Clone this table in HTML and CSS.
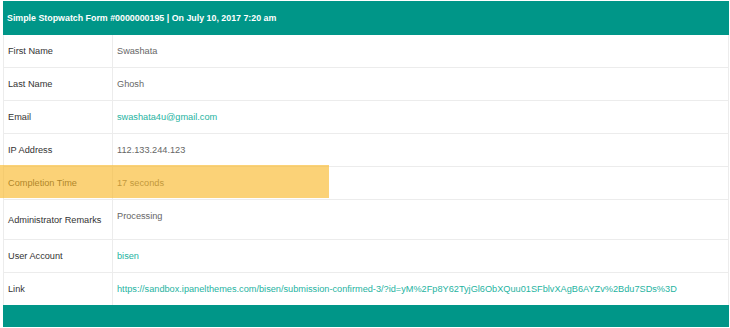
FILE: index.html
```html
<!DOCTYPE html>
<html>
<head>
<meta charset="utf-8">
<link rel="stylesheet" href="styles.css">
</head>
<body>
<div class="panel">
  <div class="panel-head">Simple Stopwatch Form #0000000195 | On July 10, 2017 7:20 am</div>
  <table class="data">
    <tr><th>First Name</th><td>Swashata</td></tr>
    <tr><th>Last Name</th><td>Ghosh</td></tr>
    <tr><th>Email</th><td><a class="lnk">swashata4u@gmail.com</a></td></tr>
    <tr><th>IP Address</th><td>112.133.244.123</td></tr>
    <tr class="hl-row"><th>Completion Time</th><td>17 seconds<span class="hl"></span></td></tr>
    <tr class="tall"><th>Administrator Remarks</th><td><div class="remark">Processing</div></td></tr>
    <tr><th>User Account</th><td><a class="lnk">bisen</a></td></tr>
    <tr><th>Link</th><td><a class="lnk">https://sandbox.ipanelthemes.com/bisen/submission-confirmed-3/?id=yM%2Fp8Y62TyjGl6ObXQuu01SFblvXAgB6AYZv%2Bdu7SDs%3D</a></td></tr>
  </table>
  <div class="panel-foot"></div>
</div>
</body>
</html>
```
FILE: styles.css
```css
html, body {
  margin: 0;
  padding: 0;
  background: #fff;
}
body {
  padding: 1px 1px 0 3px;
  font-family: "Liberation Sans", Arial, sans-serif;
  font-size: 9.2px;
}
.panel {
  width: 726px;
  position: relative;
}
.panel-head {
  background: #009688;
  color: #fff;
  font-weight: bold;
  font-size: 8.85px;
  height: 34px;
  line-height: 34px;
  padding-left: 4px;
}
.data {
  width: 100%;
  border-collapse: collapse;
  border-left: 1px solid #ececec;
  border-right: 1px solid #ececec;
}
.data th, .data td {
  height: 32px;
  padding: 0 0 0 4px;
  text-align: left;
  vertical-align: middle;
  border-bottom: 1px solid #ececec;
}
.data th {
  width: 104px;
  font-weight: normal;
  color: #333;
  border-right: 1px solid #ececec;
}
.data td {
  color: #666;
}
.data tr:last-child th, .data tr:last-child td {
  border-bottom: none;
}
.tall th, .tall td {
  height: 39px;
}
.remark {
  padding-bottom: 8px;
}
.lnk {
  color: #26b39f;
  text-decoration: none;
}
.hl-row td {
  position: relative;
}
.hl {
  position: absolute;
  left: -113px;
  top: -2px;
  width: 329px;
  height: 33px;
  background: rgba(248, 182, 36, 0.62);
}
.panel-foot {
  background: #009688;
  height: 22px;
}
```
